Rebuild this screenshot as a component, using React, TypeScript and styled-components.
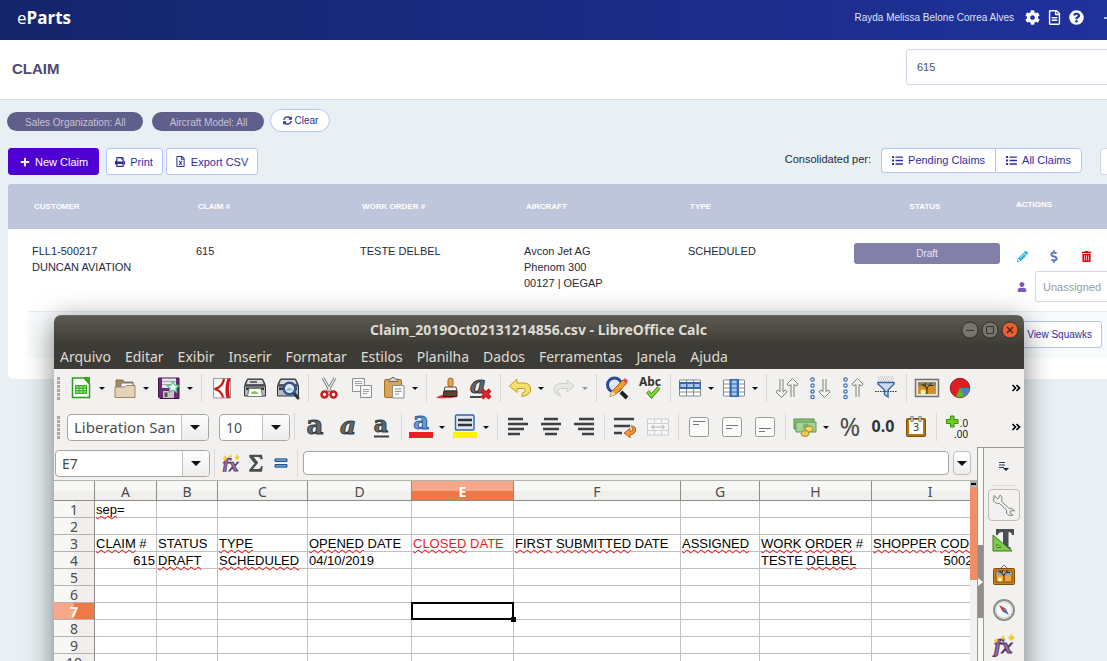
import React from "react";
import styled, { createGlobalStyle, css } from "styled-components";
import {
  FaCog,
  FaDollarSign,
  FaList,
  FaPencilAlt,
  FaPlus,
  FaPrint,
  FaQuestionCircle,
  FaRegFileAlt,
  FaRegFileExcel,
  FaSyncAlt,
  FaTrashAlt,
  FaUser,
} from "react-icons/fa";

const GlobalStyle = createGlobalStyle`
  *, *::before, *::after { box-sizing: border-box; }
  body { margin: 0; font-family: "Liberation Sans", Arial, sans-serif; font-size: 11px; color: #1f2a3c; }
  button, input, select { font-family: inherit; font-size: inherit; color: inherit; margin: 0; }
  button { padding: 0; border: 0; background: none; cursor: pointer; }
`;

const uiFont = `"Noto Sans", "Open Sans", sans-serif`;

/* ---------- Web application ---------- */

const Desktop = styled.div`
  position: relative;
  min-height: 100vh;
  overflow: hidden;
  background: #e8f0f3;
`;

const TopBar = styled.header`
  display: flex;
  align-items: center;
  justify-content: space-between;
  height: 40px;
  padding: 0 0 5px 17px;
  background: linear-gradient(90deg, #14256b, #20319c);
  color: #fff;
`;

const Logo = styled.a`
  font: 700 17px/20px "Open Sans", sans-serif;
  color: #fff;
  text-decoration: none;
  span { font-weight: 400; }
`;

const UserArea = styled.div`
  display: flex;
  align-items: center;
  gap: 7px;
  font-size: 10px;
  color: #dfe3f6;
`;

const UserName = styled.span`
  margin-right: 4px;
`;

const BarIcon = styled.button`
  display: flex;
  color: #fff;
  font-size: 15px;
`;

const BarMore = styled.button`
  width: 16px;
  height: 2px;
  margin: 0 -13px 0 13px;
  background: #9fc4e8;
`;

const PageHead = styled.div`
  display: flex;
  align-items: center;
  justify-content: space-between;
  height: 60px;
  padding: 0 0 5px 12px;
  border-bottom: 1px solid #d0dfe3;
  background: #fff;
`;

const PageTitle = styled.h1`
  margin: 4px 0 0;
  font-size: 15px;
  line-height: 18px;
  color: #4b4a72;
`;

const SearchInput = styled.input`
  width: 240px;
  height: 36px;
  margin-right: -39px;
  padding: 0 10px;
  border: 1px solid #d3d5e4;
  border-radius: 3px;
  background: #fff;
  color: #4b4f6c;
`;

const Filters = styled.div`
  display: flex;
  align-items: center;
  padding: 9px 0 0 7px;
`;

const Pill = styled.button`
  height: 19px;
  margin: 2px 9px 0 0;
  padding: 1px 17px 0 18px;
  border-radius: 10px;
  background: #605f8b;
  color: #c3c2d6;
  font-size: 10px;
`;

const outlined = css`
  border: 1px solid #b6c3f8;
  background: #fff;
  color: #2b2e9f;
`;

const ClearButton = styled.button`
  ${outlined}
  display: flex;
  align-items: center;
  gap: 2px;
  height: 23px;
  margin-left: -3px;
  padding: 0 11px 1px 12px;
  border-radius: 12px;
  font-size: 10px;
`;

const Actions = styled.div`
  display: flex;
  align-items: flex-start;
  padding: 16px 0 9px 8px;
`;

const ActionButton = styled.button<{ $primary?: boolean }>`
  ${outlined}
  display: flex;
  align-items: center;
  gap: 5px;
  height: 27px;
  padding: 0 9px 0 8px;
  margin-right: 3px;
  border-radius: 3px;
  ${(p) =>
    p.$primary &&
    css`
      gap: 5px;
      margin-right: 7px;
      padding: 0 10px 0 11px;
      border-color: #4d00d0;
      background: #4d00d0;
      color: #fff;
    `}
`;

const Consolidated = styled.div`
  display: flex;
  margin-left: auto;
  line-height: 22px;
`;

const ButtonGroup = styled.div`
  display: flex;
  margin: 0 18px 0 10px;
  button {
    ${outlined}
    display: flex;
    align-items: center;
    gap: 5px;
    height: 25px;
    padding: 0 10px 1px;
  }
  button:first-child { border-radius: 4px 0 0 4px; border-right: 0; }
  button:last-child { border-radius: 0 4px 4px 0; }
`;

const EdgeButton = styled.button`
  width: 40px;
  height: 27px;
  margin-right: -33px;
  border: 1px solid #d3d5e4;
  border-radius: 3px;
  background: #fff;
`;

const ClaimCard = styled.div`
  margin-left: 8px;
  padding-bottom: 21px;
  border-radius: 3px 0 0 6px;
  background: #fff;
  overflow: hidden;
`;

const ClaimTable = styled.table`
  width: 100%;
  table-layout: fixed;
  border-spacing: 0;
  line-height: 16px;
  th {
    height: 45px;
    padding: 0 0 0 26px;
    background: #bfc5db;
    color: #fff;
    font-size: 8px;
    text-align: left;
  }
  th.status { text-align: center; padding-left: 22px; }
  th.actions { padding: 0 0 4px 16px; }
  td { height: 82px; padding: 14px 0 0 24px; vertical-align: top; }
  td.status { padding-left: 26px; }
  td.actions { padding: 18px 0 0 16px; }
`;

const StatusBadge = styled.div`
  height: 21px;
  border-radius: 3px;
  background: #827fa8;
  color: #e8e7f1;
  font-size: 10px;
  line-height: 21px;
  text-align: center;
`;

const IconRow = styled.div`
  display: flex;
  align-items: center;
  gap: 20px;
  height: 18px;
`;

const RowIcon = styled.button<{ $color: string }>`
  display: flex;
  justify-content: center;
  width: 12px;
  flex: none;
  font-size: 11px;
  color: ${(p) => p.$color};
`;

const AssignRow = styled.div`
  display: flex;
  align-items: center;
  gap: 7px;
  margin-top: 6px;
`;

const AssignSelect = styled.select`
  appearance: none;
  flex: none;
  width: 110px;
  height: 31px;
  padding: 0 7px;
  border: 1px solid #d3d5e4;
  border-radius: 3px;
  background: #fff;
  color: #9a9a9e;
`;

const DetailRow = styled.div`
  display: flex;
  justify-content: flex-end;
  height: 47px;
  margin-left: 20px;
  padding: 9px 5px 0 0;
  border-top: 1px solid #ececf0;
  background: #f8fbfb;
`;

const SquawkButton = styled.button`
  ${outlined}
  height: 27px;
  padding: 0 9px;
  border-radius: 3px;
  font-size: 10px;
`;

/* ---------- Spreadsheet window ---------- */

const CalcWindow = styled.section`
  position: absolute;
  top: 315px;
  right: 83px;
  bottom: 0;
  left: 54px;
  display: flex;
  flex-direction: column;
  overflow: hidden;
  border-radius: 7px 7px 0 0;
  background: #f2f1f0;
  font-family: ${uiFont};
  color: #4c4c4c;
`;

const WindowShadow = styled.div`
  position: absolute;
  top: 315px;
  right: 83px;
  bottom: -30px;
  left: 54px;
  border-radius: 7px;
  box-shadow: 0 6px 28px rgba(0, 0, 0, 0.5);
`;

const WindowTop = styled.div`
  flex: none;
  background: linear-gradient(#5b5950, #3d3b36 30px, #3d3b37);
  border-top: 1px solid #6a6860;
  color: #dfdbd2;
`;

const TitleBar = styled.div`
  display: grid;
  grid-template-columns: 1fr auto 1fr;
  align-items: center;
  height: 28px;
  padding: 0 5px 0 4px;
`;

const WindowTitle = styled.h2`
  grid-column: 2;
  margin: 0;
  font-size: 14px;
  line-height: 20px;
  font-weight: 700;
`;

const WindowButtons = styled.div`
  display: flex;
  justify-content: flex-end;
  gap: 2px;
  button { display: flex; }
`;

const MenuBar = styled.nav`
  display: flex;
  gap: 14px;
  height: 25px;
  padding: 0 6px;
  button { font-size: 14px; line-height: 25px; color: #dfdbd2; }
`;

const Toolbar = styled.div<{ $height: number }>`
  display: flex;
  flex: none;
  align-items: center;
  height: ${(p) => p.$height}px;
  padding: 0 0 0 3px;
`;

const Grip = styled.span<{ $gap: number }>`
  width: 3px;
  height: 23px;
  margin-right: ${(p) => p.$gap}px;
  background: repeating-linear-gradient(#aaa9a7 0 3px, transparent 3px 4px);
`;

const Divider = styled.span`
  flex: none;
  width: 8px;
  height: 28px;
  background: linear-gradient(#dad8d6, #dad8d6) center / 1px 100% no-repeat;
`;

const Tool = styled.button<{ $split?: boolean; $faded?: boolean }>`
  display: flex;
  flex: none;
  align-items: center;
  justify-content: ${(p) => (p.$split ? "space-between" : "center")};
  width: ${(p) => (p.$split ? 44 : 33)}px;
  height: 30px;
  padding: ${(p) => (p.$split ? "0 4px" : "0")};
  opacity: ${(p) => (p.$faded ? 0.4 : 1)};
  svg { overflow: visible; }
`;

const Caret = styled.span<{ $big?: boolean }>`
  border: solid transparent;
  border-width: ${(p) => (p.$big ? "5px 5px 0" : "3px 3px 0")};
  border-top-color: #111;
`;

const Overflow = styled.button`
  width: 16px;
  margin-left: auto;
  display: flex;
  justify-content: center;
`;

const Combo = styled.div<{ $width: number; $gap?: number; $large?: boolean }>`
  display: flex;
  flex: none;
  width: ${(p) => p.$width}px;
  height: 27px;
  margin-right: ${(p) => p.$gap ?? 0}px;
  border: 1px solid #a9a6a2;
  border-radius: 4px;
  background: #fff;
  overflow: hidden;
  input {
    flex: 1;
    min-width: 0;
    padding: 0 6px;
    border: 0;
    background: transparent;
    font-size: ${(p) => (p.$large ? 15 : 14)}px;
    color: #4c4c4c;
  }
  button {
    display: flex;
    align-items: center;
    justify-content: center;
    width: 27px;
    border-left: 1px solid #c4c1be;
    background: linear-gradient(#fdfdfd, #eeedec);
  }
`;

const WorkArea = styled.div`
  display: flex;
  flex: 1;
  min-height: 0;
`;

const SheetColumn = styled.div`
  display: flex;
  flex: 1;
  flex-direction: column;
  min-width: 0;
`;

const FormulaBar = styled.div`
  display: flex;
  flex: none;
  align-items: center;
  height: 34px;
  padding: 0 6px 1px 1px;
  border-bottom: 1px solid #b5b3b0;
`;

const FormulaTool = styled.button`
  display: flex;
  justify-content: center;
  width: 25px;
`;

const FormulaInput = styled.input`
  flex: 1;
  min-width: 0;
  height: 24px;
  margin: 0 4px 0 2px;
  border: 1px solid #a9a6a2;
  border-radius: 4px;
  background: #fff;
`;

const ExpandButton = styled.button`
  display: flex;
  align-items: center;
  justify-content: center;
  width: 18px;
  height: 24px;
  border: 1px solid #c0bdba;
  border-radius: 4px;
  background: linear-gradient(#fff, #eeedec);
`;

const SheetArea = styled.div`
  display: flex;
  flex: 1;
  min-height: 0;
`;

const SheetView = styled.div`
  flex: 1;
  min-width: 0;
  overflow: hidden;
  background: #fff;
`;

const Sheet = styled.table`
  width: 935px;
  table-layout: fixed;
  border-spacing: 0;
  color: #000;
  th {
    height: 17px;
    padding: 1px 0 0;
    border-right: 1px solid #8e8b87;
    border-bottom: 1px solid #b5b3b0;
    background: linear-gradient(90deg, #f7f7f6 50%, #f0efee 50%);
    color: #4c4c4c;
    font-size: 14px;
    font-weight: 400;
    line-height: 15px;
  }
  thead th {
    height: 20px;
    border-bottom-color: #8e8b87;
    background: linear-gradient(#f7f7f6 50%, #f0efee 50%);
  }
  th.active {
    background: linear-gradient(90deg, #f7a78a 50%, #f07746 50%);
    color: #fff;
    font-weight: 700;
  }
  thead th.active { background: linear-gradient(#f7a78a 50%, #f07746 50%); }
`;

const Cell = styled.td<{ $right?: boolean; $red?: boolean }>`
  position: relative;
  height: 17px;
  padding: 1px 1px 0;
  border-right: 1px solid #c0c0c0;
  border-bottom: 1px solid #c0c0c0;
  font: 13px/15px "Liberation Sans", Arial, sans-serif;
  white-space: nowrap;
  text-align: ${(p) => (p.$right ? "right" : "left")};
  color: ${(p) => (p.$red ? "#ed1c24" : "#000")};
`;

const Misspelt = styled.span`
  text-decoration: underline wavy #f00000 1px;
  text-decoration-skip-ink: none;
  text-underline-offset: 1px;
`;

const Cursor = styled.span`
  position: absolute;
  z-index: 1;
  inset: -1px -1px -1px;
  border: 2px solid #000;
  &::after {
    content: "";
    position: absolute;
    right: -4px;
    bottom: -4px;
    width: 5px;
    height: 5px;
    background: #000;
  }
`;

const ScrollTrack = styled.div`
  display: flex;
  flex-direction: column;
  width: 7px;
  background: #f2f1f0;
`;

const ScrollSplit = styled.span`
  height: 7px;
  border: solid #b0aeab;
  border-width: 2px 1px 3px;
  background: #000;
`;

const ScrollThumb = styled.span`
  height: 92px;
  background: #f18d67;
`;

const Splitter = styled.div`
  display: flex;
  flex-direction: column;
  width: 7px;
  padding-top: 97px;
  border: solid #9b9895;
  border-width: 1px 1px 0;
  background: #f7f7f6;
`;

const SplitterHandle = styled.button`
  display: flex;
  align-items: center;
  justify-content: center;
  height: 73px;
  background: #918e8a;
`;

const SideDeck = styled.aside`
  display: flex;
  flex-direction: column;
  align-items: center;
  gap: 3px;
  width: 40px;
  border-top: 1px solid #9b9895;
`;

const DeckMenu = styled.button`
  display: flex;
  align-items: center;
  justify-content: center;
  width: 24px;
  height: 39px;
  border-bottom: 1px solid #dcdad8;
`;

const DeckTab = styled.button<{ $active?: boolean }>`
  display: flex;
  flex: none;
  align-items: center;
  justify-content: center;
  width: 32px;
  height: 32px;
  border: 1px solid ${(p) => (p.$active ? "#bdbab7" : "transparent")};
  border-radius: 4px;
`;

/* ---------- Icons ---------- */

const Svg = ({ children, size = 24 }: { children: React.ReactNode; size?: number }) => (
  <svg width={size} height={size} viewBox="0 0 24 24" aria-hidden="true">
    {children}
  </svg>
);

const Letter = ({ t, x = 12, y = 19, size = 22, fill = "#555a5c", style = "normal", family = "DejaVu Serif", weight = 700, edge }: any) => (
  <text x={x} y={y} fontSize={size} fontFamily={family} fontStyle={style} fontWeight={weight} fill={fill} stroke={edge} textAnchor="middle">
    {t}
  </text>
);

const tree = (
  <path d="M12 18 V11 M12 13 L8 8 M12 12 L16 7 M10 10.500 L10.500 7 M14 9.500 L18 9.500 M9 9 L6.500 9" stroke="#3b2a12" fill="none" />
);

const icons: Record<string, React.ReactNode> = {
  doc: (
    <Svg>
      <path d="M3.500 2 H15 L20.500 8 V21.500 H3.500 Z" fill="#fff" stroke="#2f9b1c" strokeWidth="1.500" />
      <path d="M14 1 H21 V8 Z" fill="#3aa623" />
      <path d="M6 9 H18 V18 H6 Z" fill="#3cae25" />
      <path d="M7 11 H17 M7 13.500 H17 M7 16 H17" stroke="#d7f5cf" />
      <path d="M10 9 V18 M14 9 V18" stroke="#3cae25" />
    </Svg>
  ),
  folder: (
    <Svg>
      <path d="M3 19 V4 H10 L11 6 H20 V19 Z" fill="#a58b63" stroke="#8a7350" />
      <path d="M8 7 H20 V14 H8 Z" fill="#fff" stroke="#777" />
      <path d="M2 21.500 V11 H12 L13.500 9.500 H22 V21.500 Z" fill="#e4d2b8" stroke="#a08660" />
    </Svg>
  ),
  save: (
    <Svg>
      <path d="M1.500 2 H22 V22.500 H3 L1.500 21 Z" fill="#6a2c75" stroke="#3d1346" />
      <path d="M5 2.500 H19 V12 H5 Z" fill="#e9e5ee" />
      <path d="M5 5.500 H19 M5 8.500 H14" stroke="#a9a3b3" />
      <path d="M6 15 H17 V22 H6 Z" fill="#c9c3cd" />
      <path d="M7.500 16.500 H10.500 V21 H7.500 Z" fill="#554" />
      <path d="M16 5.500 L17.800 9 L21.800 9.600 L19 12.200 L19.600 16 L16 14.200 L12.400 16 L13 12.200 L10.200 9.600 L14.200 9 Z" fill="#f4fff4" stroke="#4cc77e" strokeWidth="1.300" />
    </Svg>
  ),
  pdf: (
    <Svg>
      <path d="M3.500 2.500 H20.500 V22 H3.500 Z" fill="#fafafa" stroke="#999" />
      <path d="M14 3 C13 9 9 12 4.500 13 C9.500 14 12 17 13 21.500" fill="none" stroke="#c8161d" strokeWidth="2.200" />
      <path d="M20.500 2.500 H17.500 C15 9 15 16 16.500 22 H20 C18.500 16 18.500 9 20.500 2.500 Z" fill="#d4131b" />
    </Svg>
  ),
  print: (
    <Svg>
      <path d="M4.500 3 H19.500 L22 8 V13 H2 V8 Z" fill="#585d5f" stroke="#2e3436" />
      <path d="M5 4 H19 L20.500 8 H3.500 Z" fill="#dcdcda" />
      <path d="M7 6 H14" stroke="#444" strokeWidth="1.500" />
      <path d="M1.500 10 H22.500 V20 H1.500 Z" fill="#b9bab7" stroke="#2e3436" />
      <path d="M3 11.500 H21 V14 H3 Z" fill="#2e3436" />
      <path d="M6 12.500 H18 L19.500 20.500 H4.500 Z" fill="#fff" stroke="#777" />
      <path d="M7.500 18 Q11 12 16 18 Z" fill="#8ac25c" />
    </Svg>
  ),
  preview: (
    <Svg>
      <path d="M4.500 3 H19.500 L22 8 V13 H2 V8 Z" fill="#585d5f" stroke="#2e3436" />
      <path d="M5 4 H19 L20.500 8 H3.500 Z" fill="#dcdcda" />
      <path d="M1.500 10 H22.500 V20 H1.500 Z" fill="#b9bab7" stroke="#2e3436" />
      <path d="M3 11.500 H21 V14 H3 Z" fill="#2e3436" />
      <path d="M18 17 L22 22" stroke="#333" strokeWidth="3" strokeLinecap="round" />
      <circle cx="13.500" cy="12.500" r="5.800" fill="#dbe8f8" stroke="#34519b" strokeWidth="2.500" />
      <path d="M10 14.500 Q13 9 17 14.500 Z" fill="#9bbd92" />
    </Svg>
  ),
  cut: (
    <Svg>
      <path d="M6 2 L14 16 M18 2 L10 16" stroke="#7d807e" strokeWidth="3" />
      <path d="M6 2 L13.500 15 M18 2 L10.500 15" stroke="#eee" strokeWidth="1.200" />
      <circle cx="7.500" cy="18.500" r="3" fill="none" stroke="#c81c24" strokeWidth="2.500" />
      <circle cx="16.500" cy="18.500" r="3" fill="none" stroke="#c81c24" strokeWidth="2.500" />
    </Svg>
  ),
  copy: (
    <Svg>
      <path d="M2.500 2.500 H14.500 V15.500 H2.500 Z" fill="#fafafa" stroke="#8c8f8c" />
      <path d="M5 5.500 H12 M5 7.500 H12 M5 9.500 H10" stroke="#a0a3a0" />
      <path d="M10.500 9.500 H21.500 V21.500 H10.500 Z" fill="#fafafa" stroke="#8c8f8c" />
      <path d="M13 13.500 H19 M13 15.500 H19 M13 17.500 H17" stroke="#a0a3a0" />
    </Svg>
  ),
  paste: (
    <Svg>
      <rect x="2.500" y="3.500" width="17" height="18" rx="1.500" fill="#d9a458" stroke="#9d6e24" />
      <path d="M7 5.500 V3 H9 L10 1.500 H12 L13 3 H15.500 V5.500 Z" fill="#d5d6d4" stroke="#666" />
      <path d="M10.500 9.500 H22 V22 H10.500 Z" fill="#fafafa" stroke="#8c8f8c" />
      <path d="M13 13 H19.500 M13 15.500 H19.500 M13 18 H17" stroke="#8c8f8c" />
    </Svg>
  ),
  brush: (
    <Svg>
      <path d="M1 22 Q10 15 22 21 Q14 23 1 22 Z" fill="#e8323a" />
      <rect x="13" y="2" width="5" height="9" rx="2.400" fill="#e5a24c" stroke="#9d6420" />
      <path d="M10 11 H21 L22 15 H9 Z" fill="#efefec" stroke="#555" />
      <path d="M9 15 H22 V20.500 H8 Z" fill="#5a4436" stroke="#33241b" />
    </Svg>
  ),
  clear: (
    <Svg>
      <Letter t="a" x="10" y="17" size={25} style="italic" fill="#63686a" edge="#34393b" />
      <path d="M2 21 H13" stroke="#444" strokeWidth="2" />
      <path d="M14 14 L22 22 M22 14 L14 22" stroke="#a30810" strokeWidth="4" />
      <path d="M14 14 L22 22 M22 14 L14 22" stroke="#e8222c" strokeWidth="2.500" />
    </Svg>
  ),
  undo: (
    <Svg>
      <path d="M9 3 L1.500 10 L9 16.500 V12.500 H16 Q18 13 17 15.500 L14 17.500 V20.500 Q23 19 22.500 13 Q22 7 16 7 H9 Z" fill="#f6e06a" stroke="#bd9a1b" strokeLinejoin="round" />
    </Svg>
  ),
  redo: (
    <Svg>
      <path d="M15 4 L22 10 L15 16 V12.500 H8 Q5 13 6.500 17 L9 20 Q1.500 18 2 12.500 Q3 7.500 9 7.500 H15 Z" fill="#d6d6d4" stroke="#989894" strokeLinejoin="round" />
    </Svg>
  ),
  find: (
    <Svg>
      <path d="M16 16 L22 22" stroke="#222" strokeWidth="4" />
      <circle cx="9.500" cy="9" r="7" fill="#dfe9f7" stroke="#2c4a9a" strokeWidth="3" />
      <path d="M5 20.500 L7 15 L18 4 L21.500 7.500 L10.500 18.500 Z" fill="#f39a2d" stroke="#b1600e" />
      <path d="M18 4 L20 2 L23 5 L21.500 7.500 Z" fill="#e9464d" />
      <path d="M5 20.500 L7 15 L10.500 18.500 Z" fill="#f3dcb8" />
    </Svg>
  ),
  spell: (
    <Svg>
      <Letter t="Abc" family="Noto Sans" size={12} y={10} fill="#333" />
      <path d="M9.500 15.500 L13.500 20 L21 11.500" stroke="#3f9410" strokeWidth="4" fill="none" />
      <path d="M9.500 15.500 L13.500 20 L21 11.500" stroke="#84d83c" strokeWidth="2" fill="none" />
    </Svg>
  ),
  rows: (
    <Svg>
      <path d="M1.500 4 H22.500 V20 H1.500 Z" fill="#fff" stroke="#898c89" />
      <path d="M1.500 16 H22.500 M1.500 12.500 H22.500 M8.500 4 V20 M15.500 4 V20" stroke="#898c89" />
      <path d="M1 6 H23 V13 H1 Z" fill="#3468b0" />
      <path d="M2.500 9.500 H8 M9.500 9.500 H15 M16.500 9.500 H21.500" stroke="#a9c6ec" strokeWidth="3" />
    </Svg>
  ),
  cols: (
    <Svg>
      <path d="M1.500 4 H22.500 V20 H1.500 Z" fill="#fff" stroke="#898c89" />
      <path d="M1.500 8 H22.500 M1.500 12 H22.500 M1.500 16 H22.500" stroke="#898c89" />
      <path d="M7.500 3 H17 V21 H7.500 Z" fill="#3468b0" />
      <path d="M12.200 4.500 V7.500 M12.200 8.500 V11.500 M12.200 12.500 V15.500 M12.200 16.500 V19.500" stroke="#a9c6ec" strokeWidth="5" />
    </Svg>
  ),
  sort: (
    <Svg>
      <path d="M5 3 V15.500 M8 3 V15.500 M5 15.500 L2.500 14 L1 16 L6.500 21.500 L12 16 L10.500 14 L8 15.500 M16 21 V8.500 M19 21 V8.500 M16 8.500 L13.500 10 L12 8 L17.500 2.500 L23 8 L21.500 10 L19 8.500" fill="none" stroke="#7f827f" />
    </Svg>
  ),
  sortDown: (
    <Svg>
      {[3.5, 9.5, 15.5, 21].map((y) => (
        <circle key={y} cx="4.500" cy={y} r="1.700" fill="#fff" stroke="#3a6eb5" strokeWidth="1.200" />
      ))}
      <path d="M15 3 V15.500 M18 3 V15.500 M15 15.500 L12.500 14 L11 16 L16.500 21.500 L22 16 L20.500 14 L18 15.500" fill="none" stroke="#7f827f" />
    </Svg>
  ),
  sortUp: (
    <Svg>
      {[3.5, 9.5, 15.5, 21].map((y) => (
        <circle key={y} cx="4.500" cy={y} r="1.700" fill="#fff" stroke="#3a6eb5" strokeWidth="1.200" />
      ))}
      <path d="M15 21 V8.500 M18 21 V8.500 M15 8.500 L12.500 10 L11 8 L16.500 2.500 L22 8 L20.500 10 L18 8.500" fill="none" stroke="#7f827f" />
    </Svg>
  ),
  filter: (
    <Svg>
      <path d="M4 1 H20 M5 3 H20 M4 5 H20" stroke="#b0b0ae" strokeDasharray="1 1" strokeWidth="1" />
      <path d="M4 6.500 H20 V8 L14 14 V21 L10.500 18.500 V14 L4 8 Z" fill="#c9def5" stroke="#3465a4" strokeWidth="1.400" />
      <path d="M1 15.500 H23" stroke="#333" strokeDasharray="1.500 1" />
    </Svg>
  ),
  image: (
    <Svg>
      <path d="M0.500 3.500 H23.500 V20.500 H0.500 Z" fill="#e9e9e6" stroke="#6f726f" strokeWidth="1.500" />
      <path d="M3 6 H21 V18 H3 Z" fill="#d48e2c" />
      <path d="M3 6 H21 V10 H3 Z" fill="#8b8459" />
      <circle cx="8" cy="16" r="2.500" fill="#fff3a0" />
      {tree}
    </Svg>
  ),
  chart: (
    <Svg>
      <circle cx="12" cy="12" r="9.700" fill="#df1f26" stroke="#9c1016" />
      <path d="M12 12 H21.700 Q21.500 18 16.500 20.500 Z" fill="#4a83c9" />
      <path d="M12 12 L16.500 20.500 Q12 22.500 8 20.500 Z" fill="#5fb52c" />
    </Svg>
  ),
  bold: <Svg><Letter t="a" size={26} fill="#63686a" edge="#34393b" /></Svg>,
  italic: <Svg><Letter t="a" size={25} style="italic" fill="#63686a" edge="#34393b" /></Svg>,
  underline: <Svg><Letter t="a" size={22} y={17} fill="#63686a" edge="#34393b" /><path d="M5 21.500 H20" stroke="#3c4143" strokeWidth="2" /></Svg>,
  fontColor: <Svg><Letter t="a" size={24} y={14} fill="#6b9bd4" edge="#2d5f9f" /><path d="M0 17 H24 V23 H0 Z" fill="#ee1c25" /></Svg>,
  highlight: (
    <Svg>
      <rect x="2.500" y="0" width="18.500" height="15" rx="1" fill="#dbe7f6" stroke="#3465a4" strokeWidth="1.400" />
      <path d="M5 5 H19 M5 10 H19" stroke="#333" strokeWidth="2.400" />
      <path d="M0 17 H24 V23 H0 Z" fill="#fff200" />
    </Svg>
  ),
  left: <Svg><path d="M2 4 H17 M2 9 H22 M2 14 H18 M2 19 H14" stroke="#3c4143" strokeWidth="2.400" /></Svg>,
  center: <Svg><path d="M5 4 H19 M2 9 H22 M4 14 H20 M6 19 H18" stroke="#3c4143" strokeWidth="2.400" /></Svg>,
  right: <Svg><path d="M7 4 H22 M2 9 H22 M6 14 H22 M10 19 H22" stroke="#3c4143" strokeWidth="2.400" /></Svg>,
  wrap: (
    <Svg>
      <path d="M1 4 H21 M1 11 H17 M1 18 H9" stroke="#3c4143" strokeWidth="2.400" />
      <path d="M18 11 Q23 11 22.500 15 Q22 19.500 17 19.500 V22.500 L11 18 L17 13.500 V16.500 Q20 16.500 20 14 Z" fill="#f5983a" stroke="#ba5b0d" />
    </Svg>
  ),
  merge: (
    <Svg>
      <path d="M1.500 4 H22.500 V20 H1.500 Z M1.500 8.500 H22.500 M1.500 15.500 H22.500 M8.500 4 V8.500 M15.500 4 V8.500 M8.500 15.500 V20 M15.500 15.500 V20" fill="#fff" stroke="#999c99" />
      <path d="M6 12 H18 M8 10 L5.500 12 L8 14 M16 10 L18.500 12 L16 14" fill="none" stroke="#555" />
    </Svg>
  ),
  top: <Svg><rect x="2.500" y="2.500" width="19" height="19" rx="2" fill="#fbfbfa" stroke="#999c99" /><path d="M6 6.500 H18 M6 9.500 H12" stroke="#777" /></Svg>,
  middle: <Svg><rect x="2.500" y="2.500" width="19" height="19" rx="2" fill="#fbfbfa" stroke="#999c99" /><path d="M6 10.500 H18 M6 13.500 H12" stroke="#777" /></Svg>,
  bottom: <Svg><rect x="2.500" y="2.500" width="19" height="19" rx="2" fill="#fbfbfa" stroke="#999c99" /><path d="M6 13.500 H18 M6 16.500 H12" stroke="#777" /></Svg>,
  money: (
    <Svg>
      <path d="M1 4 H21 V14 H1 Z" fill="#8cc27c" stroke="#4f8f42" />
      <path d="M3 7 H23 V17 H3 Z" fill="#a5d296" stroke="#5c9a4e" />
      <circle cx="13" cy="11.500" r="3" fill="#7bb56b" />
      <ellipse cx="16" cy="14" rx="4" ry="3" fill="#f0d869" stroke="#a88b1d" />
      <ellipse cx="12" cy="18.500" rx="4" ry="3" fill="#e6cb50" stroke="#a88b1d" />
    </Svg>
  ),
  percent: <Svg><Letter t="%" family="Noto Sans" size={25} y={21} weight={400} fill="#4b4b4b" /></Svg>,
  number: <Svg><Letter t="0.0" family="Noto Sans" size={16} y={17} fill="#333" /></Svg>,
  date: (
    <Svg>
      <rect x="2.500" y="3.500" width="19" height="18" rx="1" fill="#b87316" stroke="#7f4c07" />
      <path d="M5 5 H19 V19 H5 Z" fill="#fbfbfa" />
      <path d="M8 1 V7 M16 1 V7" stroke="#777" strokeWidth="3" />
      <path d="M8 1.500 V6.500 M16 1.500 V6.500" stroke="#eee" />
      <Letter t="3" family="Noto Sans" size={10} y={16} weight={400} fill="#333" />
    </Svg>
  ),
  addDecimal: (
    <Svg>
      <path d="M5.500 1 H9 V4.500 H13 V8.500 H9 V12 H5.500 V8.500 H1.500 V4.500 H5.500 Z" fill="#6dcf1e" stroke="#3c8a0b" />
      <Letter t=".0" family="Liberation Sans" x="19" y={12} size={10} weight={400} fill="#111" />
      <Letter t=".00" family="Liberation Sans" x="16" y={23} size={10} weight={400} fill="#111" />
    </Svg>
  ),
  fx: (
    <Svg>
      <Letter t="fx" y={20} x="11" size={18} style="italic" fill="#9a6fa5" edge="#5c3566" />
      <path d="M2 8 L4 5 L6 8 L4 10 Z M9 5 L11 2 L13 5 L11 7 Z M16 5 L19.500 1 L23 5 L19.500 8 Z" fill="#f2cf2e" />
    </Svg>
  ),
};

const MoreIcon = () => (
  <svg width="10" height="8" viewBox="0 0 10 8" aria-hidden="true">
    <path d="M1.500 1 L4.500 4 L1.500 7 M5.500 1 L8.500 4 L5.500 7" fill="none" stroke="#000" strokeWidth="1.600" />
  </svg>
);

type ToolItem = "|" | { id: string; label: string; split?: boolean; faded?: boolean };
const t = (id: string, label: string, split = false, faded = false): ToolItem => ({ id, label, split, faded });

const standardTools: ToolItem[] = [
  t("doc", "Novo", true), t("folder", "Abrir", true), t("save", "Salvar", true), "|",
  t("pdf", "Exportar como PDF"), t("print", "Imprimir"), t("preview", "Visualizar"), "|",
  t("cut", "Cortar"), t("copy", "Copiar"), t("paste", "Colar", true), "|",
  t("brush", "Clonar"), t("clear", "Limpar"), "|",
  t("undo", "Desfazer", true), t("redo", "Refazer", true, true), "|",
  t("find", "Localizar"), t("spell", "Ortografia"), "|",
  t("rows", "Linha", true), t("cols", "Coluna", true), "|",
  t("sort", "Classificar"), t("sortDown", "Crescente"), t("sortUp", "Decrescente"), t("filter", "Autofiltro"), "|",
  t("image", "Imagem"), t("chart", "Gráfico"),
];

const formatTools: ToolItem[] = [
  "|", t("bold", "Negrito"), t("italic", "Itálico"), t("underline", "Sublinhado"), "|",
  t("fontColor", "Cor da fonte", true), t("highlight", "Cor de fundo", true), "|",
  t("left", "Esquerda"), t("center", "Centro"), t("right", "Direita"), "|",
  t("wrap", "Quebrar texto"), t("merge", "Mesclar", false, true), "|",
  t("top", "Em cima"), t("middle", "No meio"), t("bottom", "Embaixo"), "|",
  t("money", "Moeda", true), t("percent", "Porcentagem"), t("number", "Número"), t("date", "Data"), "|",
  t("addDecimal", "Adicionar casa decimal"),
];

const Tools = ({ items }: { items: ToolItem[] }) => (
  <>
    {items.map((item, i) =>
      item === "|" ? (
        <Divider key={i} />
      ) : (
        <Tool key={item.id} aria-label={item.label} $split={item.split} $faded={item.faded}>
          {icons[item.id]}
          {item.split && <Caret />}
        </Tool>
      )
    )}
  </>
);

/* ---------- Spreadsheet data ---------- */

const columns: [string, number][] = [
  ["A", 62], ["B", 61], ["C", 90], ["D", 104], ["E", 102], ["F", 167], ["G", 79], ["H", 112], ["I", 117],
];

type CellData = { parts: [string, boolean][]; right?: boolean; red?: boolean };
const bad = (s: string): [string, boolean] => [s, true];
const ok = (s: string): [string, boolean] => [s, false];

const cells: Record<string, CellData> = {
  A1: { parts: [bad("sep"), ok("=")] },
  A3: { parts: [bad("CLAIM"), ok(" #")] },
  B3: { parts: [ok("STATUS")] },
  C3: { parts: [bad("TYPE")] },
  D3: { parts: [bad("OPENED"), ok(" DATE")] },
  E3: { parts: [bad("CLOSED"), ok(" DATE")], red: true },
  F3: { parts: [bad("FIRST"), ok(" "), bad("SUBMITTED"), ok(" DATE")] },
  G3: { parts: [bad("ASSIGNED")] },
  H3: { parts: [bad("WORK"), ok(" "), bad("ORDER"), ok(" #")] },
  I3: { parts: [bad("SHOPPER"), ok(" "), bad("CODE")] },
  A4: { parts: [ok("615")], right: true },
  B4: { parts: [bad("DRAFT")] },
  C4: { parts: [bad("SCHEDULED")] },
  D4: { parts: [ok("04/10/2019")] },
  H4: { parts: [ok("TESTE "), bad("DELBEL")] },
  I4: { parts: [ok("500217")], right: true },
};

const menus = ["Arquivo", "Editar", "Exibir", "Inserir", "Formatar", "Estilos", "Planilha", "Dados", "Ferramentas", "Janela", "Ajuda"];

const WindowControl = ({ kind }: { kind: "min" | "max" | "close" }) => (
  <svg width="18" height="18" viewBox="0 0 18 18" aria-hidden="true">
    <circle cx="9" cy="9" r="8" fill={kind === "close" ? "#ea5f30" : "#77756e"} stroke="#33312d" />
    {kind === "min" && <path d="M5 9.500 H13" stroke="#33312d" />}
    {kind === "max" && <path d="M5.500 5.500 H12.500 V12.500 H5.500 Z" fill="none" stroke="#33312d" />}
    {kind === "close" && <path d="M6 6 L12 12 M12 6 L6 12" stroke="#43210f" strokeWidth="1.300" />}
  </svg>
);

const Calc = () => (
  <CalcWindow>
    <WindowTop>
      <TitleBar>
        <WindowTitle>Claim_2019Oct02131214856.csv - LibreOffice Calc</WindowTitle>
        <WindowButtons>
          <button aria-label="Minimizar"><WindowControl kind="min" /></button>
          <button aria-label="Maximizar"><WindowControl kind="max" /></button>
          <button aria-label="Fechar"><WindowControl kind="close" /></button>
        </WindowButtons>
      </TitleBar>
      <MenuBar>
        {menus.map((m) => <button key={m}>{m}</button>)}
      </MenuBar>
    </WindowTop>

    <Toolbar $height={38}>
      <Grip $gap={5} />
      <Tools items={standardTools} />
      <Overflow aria-label="Mais"><MoreIcon /></Overflow>
    </Toolbar>
    <Toolbar $height={40}>
      <Grip $gap={7} />
      <Combo $width={142} $gap={10} $large>
        <input aria-label="Nome da fonte" defaultValue="Liberation Sans" />
        <button aria-label="Lista de fontes"><Caret $big /></button>
      </Combo>
      <Combo $width={71}>
        <input aria-label="Tamanho da fonte" defaultValue="10" />
        <button aria-label="Lista de tamanhos"><Caret $big /></button>
      </Combo>
      <Tools items={formatTools} />
      <Overflow aria-label="Mais"><MoreIcon /></Overflow>
    </Toolbar>

    <WorkArea>
      <SheetColumn>
        <FormulaBar>
          <Combo $width={155}>
            <input aria-label="Caixa de nome" defaultValue="E7" />
            <button aria-label="Lista de nomes"><Caret $big /></button>
          </Combo>
          <Divider />
          <FormulaTool aria-label="Assistente">
            <Svg size={18}>
              <Letter t="fx" y={22} x="11" size={21} style="italic" fill="#9a6fa5" edge="#5c3566" />
              <path d="M1 6 L4 2 L7 6 L4 9 Z M9 4 L11 0 L14 4 Z M17 5 L20 0 L23 5 L20 8 Z" fill="#f2cf2e" />
            </Svg>
          </FormulaTool>
          <FormulaTool aria-label="Soma">
            <Svg size={18}>
              <path d="M3 1 H20 L21 7 H18 Q17.500 4 15 4 H9 L15 11.500 L8 20 H15 Q18 20 19 16 H21 L20 23.500 H3 V21 L10 12.500 L3 4 Z" fill="#4a4f51" />
            </Svg>
          </FormulaTool>
          <FormulaTool aria-label="Igual">
            <Svg size={18}>
              <path d="M4 6.500 H20 V10 H4 Z M4 14 H20 V17.500 H4 Z" fill="#6f9fd8" stroke="#204a87" strokeWidth="1.300" />
            </Svg>
          </FormulaTool>
          <Divider />
          <FormulaInput aria-label="Linha de entrada" />
          <ExpandButton aria-label="Expandir"><Caret $big /></ExpandButton>
        </FormulaBar>
        <SheetArea>
          <SheetView>
            <Sheet>
              <colgroup>
                <col width="41" />
                {columns.map(([c, w]) => <col key={c} width={w} />)}
              </colgroup>
              <thead>
                <tr>
                  <th />
                  {columns.map(([c]) => <th key={c} className={c === "E" ? "active" : ""}>{c}</th>)}
                </tr>
              </thead>
              <tbody>
                {[1, 2, 3, 4, 5, 6, 7, 8, 9, 10].map((r) => (
                  <tr key={r}>
                    <th className={r === 7 ? "active" : ""}>{r}</th>
                    {columns.map(([c]) => {
                      const d = cells[c + r];
                      return (
                        <Cell key={c} $right={d?.right} $red={d?.red}>
                          {d?.parts.map(([s, wrong], i) => (wrong ? <Misspelt key={i}>{s}</Misspelt> : s))}
                          {c + r === "E7" && <Cursor />}
                        </Cell>
                      );
                    })}
                  </tr>
                ))}
              </tbody>
            </Sheet>
          </SheetView>
          <ScrollTrack><ScrollSplit /><ScrollThumb /></ScrollTrack>
        </SheetArea>
      </SheetColumn>
      <Splitter>
        <SplitterHandle aria-label="Ocultar painel">
          <svg width="5" height="8" viewBox="0 0 5 8" aria-hidden="true"><path d="M0 0 L5 4 L0 8 Z" fill="#fff" /></svg>
        </SplitterHandle>
      </Splitter>
      <SideDeck>
        <DeckMenu aria-label="Menu do painel">
          <svg width="12" height="11" viewBox="0 0 12 11" aria-hidden="true">
            <path d="M1 1.500 H7 M1 4 H7 M1 6.500 H6" stroke="#2c3e5c" />
            <path d="M5 7 H11 L8 10 Z" fill="#111c33" />
          </svg>
        </DeckMenu>
        <DeckTab $active aria-label="Propriedades">
          <Svg>
            <path d="M2 2.500 L6 6 L8 2 Q11 4 9.500 8.500 L16.500 15 Q20.500 14.500 22.500 18 L19 17.500 L18 20 L21 22 Q16.500 23.500 14.500 20 L14.500 17 L7.500 10.500 Q3 11 1.500 7 L2 5 Z" fill="#f0f0ee" stroke="#7f827f" strokeLinejoin="round" />
          </Svg>
        </DeckTab>
        <DeckTab aria-label="Estilos">
          <Svg>
            <path d="M4 1 H22 V7 H20 Q19.500 4 16.500 4 V19 H18.500 V21 H9 V19 H11 V4 Q6 4 6 7 H4 Z" fill="#4a4f51" />
            <path d="M1 7 V23 H20 Z M5 16 V19.500 H9 Z" fill="#7ecb52" fillRule="evenodd" stroke="#3a7d17" />
          </Svg>
        </DeckTab>
        <DeckTab aria-label="Galeria">
          <Svg>
            <path d="M8 6 L12 2 L16 6" fill="none" stroke="#777" />
            <rect x="1.500" y="5.500" width="21" height="16" rx="1" fill="#c8811c" stroke="#7f4c07" />
            <path d="M4 8 H20 V19 H4 Z" fill="#f0a645" stroke="#7f4c07" />
            <path d="M4.500 8.500 H19.500 V12.500 H4.500 Z" fill="#8fa8c0" />
            <circle cx="8" cy="16.500" r="2" fill="#fff3a0" />
            {tree}
          </Svg>
        </DeckTab>
        <DeckTab aria-label="Navegador">
          <Svg>
            <circle cx="12" cy="12" r="10" fill="#f7f7f5" stroke="#8b8e8b" strokeWidth="2" />
            <circle cx="12" cy="12" r="8" fill="none" stroke="#d0d0cd" />
            <path d="M7 7 L13.500 10.500 L10.500 13.500 Z" fill="#dd3338" />
            <path d="M17 17 L13.500 10.500 L10.500 13.500 Z" fill="#3f6fae" />
          </Svg>
        </DeckTab>
        <DeckTab aria-label="Funções">{icons.fx}</DeckTab>
      </SideDeck>
    </WorkArea>
  </CalcWindow>
);

export default function App() {
  return (
    <>
      <GlobalStyle />
      <Desktop>
        <TopBar>
          <Logo href="#"><span>e</span>Parts</Logo>
          <UserArea>
            <UserName>Rayda Melissa Belone Correa Alves</UserName>
            <BarIcon aria-label="Settings"><FaCog /></BarIcon>
            <BarIcon aria-label="Documents"><FaRegFileAlt /></BarIcon>
            <BarIcon aria-label="Help"><FaQuestionCircle /></BarIcon>
            <BarMore aria-label="More" />
          </UserArea>
        </TopBar>
        <PageHead>
          <PageTitle>CLAIM</PageTitle>
          <SearchInput aria-label="Search claims" defaultValue="615" />
        </PageHead>
        <Filters>
          <Pill>Sales Organization: All</Pill>
          <Pill>Aircraft Model: All</Pill>
          <ClearButton><FaSyncAlt size={9} />Clear</ClearButton>
        </Filters>
        <Actions>
          <ActionButton $primary><FaPlus size={10} />New Claim</ActionButton>
          <ActionButton><FaPrint size={10} />Print</ActionButton>
          <ActionButton><FaRegFileExcel size={11} />Export CSV</ActionButton>
          <Consolidated>
            Consolidated per:
            <ButtonGroup>
              <button><FaList size={11} />Pending Claims</button>
              <button><FaList size={11} />All Claims</button>
            </ButtonGroup>
            <EdgeButton aria-label="Options" />
          </Consolidated>
        </Actions>
        <ClaimCard>
          <ClaimTable>
            <colgroup>
              {[0, 1, 2, 3, 4].map((i) => <col key={i} width="164" />)}
              <col width="172" />
              <col />
            </colgroup>
            <thead>
              <tr>
                <th>CUSTOMER</th>
                <th>CLAIM #</th>
                <th>WORK ORDER #</th>
                <th>AIRCRAFT</th>
                <th>TYPE</th>
                <th className="status">STATUS</th>
                <th className="actions">ACTIONS</th>
              </tr>
            </thead>
            <tbody>
              <tr>
                <td>FLL1-500217<br />DUNCAN AVIATION</td>
                <td>615</td>
                <td>TESTE DELBEL</td>
                <td>Avcon Jet AG<br />Phenom 300<br />00127 | OEGAP</td>
                <td>SCHEDULED</td>
                <td className="status"><StatusBadge>Draft</StatusBadge></td>
                <td className="actions">
                  <IconRow>
                    <RowIcon $color="#27b4e0" aria-label="Edit"><FaPencilAlt /></RowIcon>
                    <RowIcon $color="#6377c9" aria-label="Costs"><FaDollarSign size={13} /></RowIcon>
                    <RowIcon $color="#f00000" aria-label="Delete"><FaTrashAlt /></RowIcon>
                  </IconRow>
                  <AssignRow>
                    <RowIcon $color="#7f57c2" aria-label="Assignee"><FaUser size={10} /></RowIcon>
                    <AssignSelect aria-label="Assigned to"><option>Unassigned</option></AssignSelect>
                  </AssignRow>
                </td>
              </tr>
            </tbody>
          </ClaimTable>
          <DetailRow><SquawkButton>View Squawks</SquawkButton></DetailRow>
        </ClaimCard>
        <WindowShadow />
        <Calc />
      </Desktop>
    </>
  );
}
